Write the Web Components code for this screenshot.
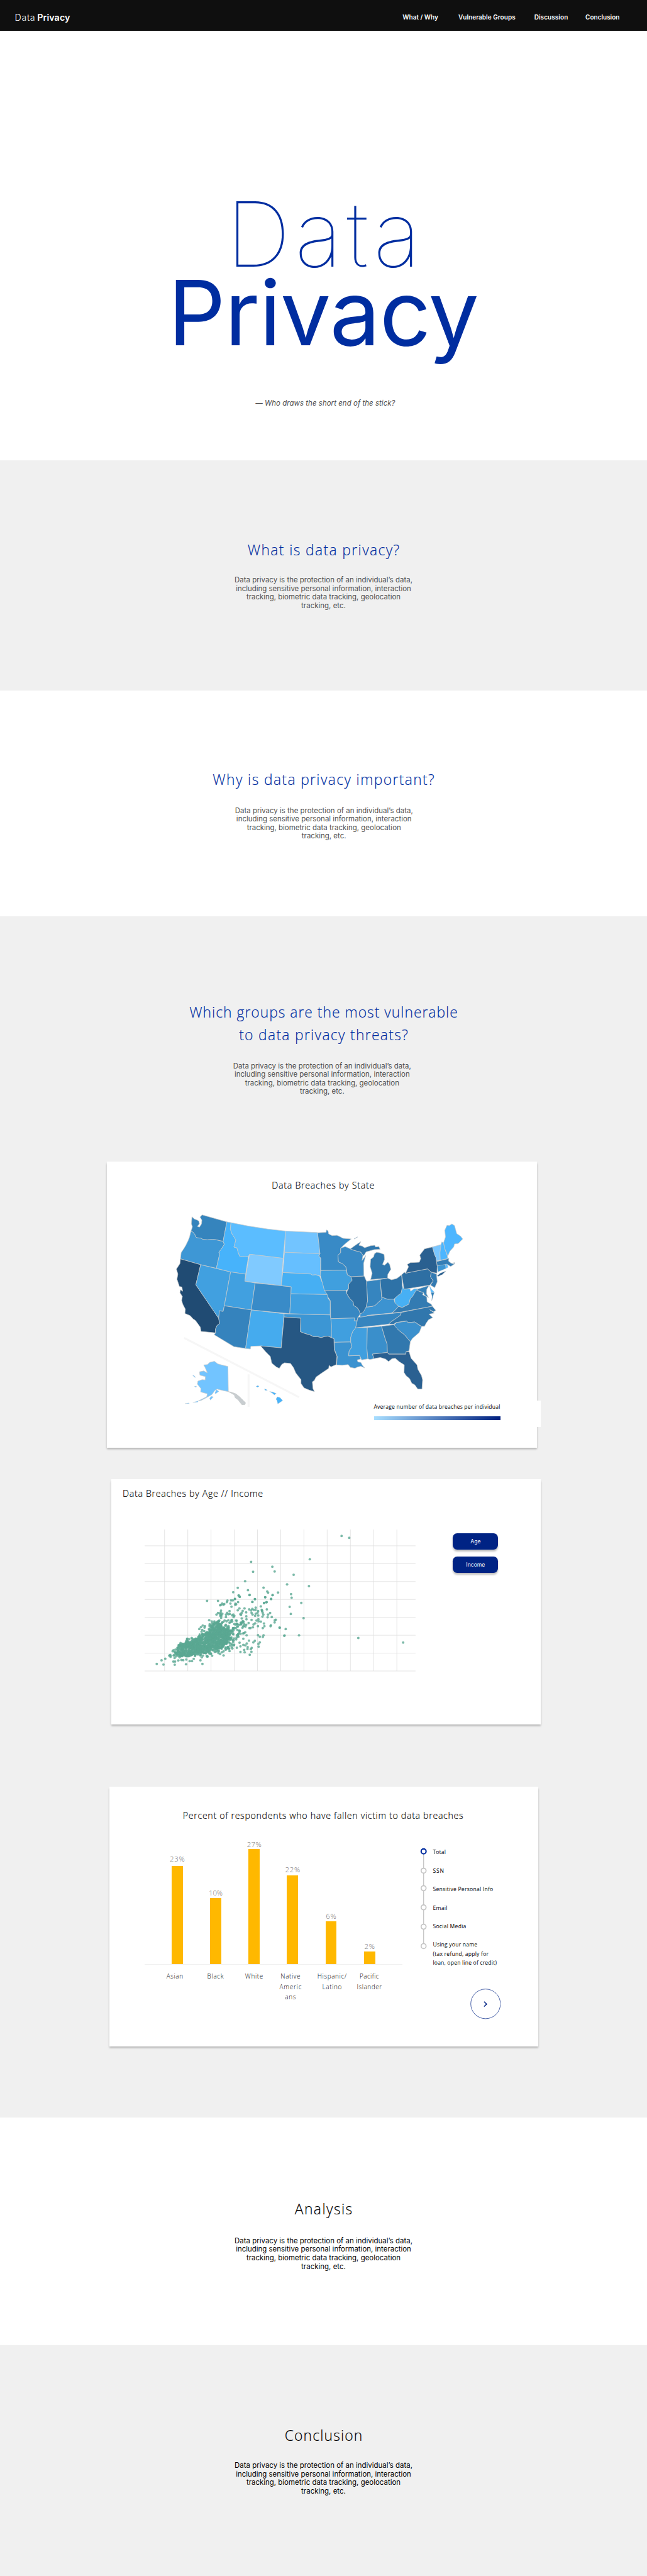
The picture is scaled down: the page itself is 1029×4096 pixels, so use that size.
<!DOCTYPE html>
<html lang="en">
<head>
<meta charset="utf-8">
<title>Data Privacy</title>
<style>
html,body{margin:0;padding:0;background:#fff}
body{width:1029px;height:4096px;overflow:hidden;background:#f0f0f0}
privacy-page{zoom:.714583}
</style>
</head>
<body>
<privacy-page></privacy-page>
<script>
const define=(name,html,after)=>customElements.define(name,class extends HTMLElement{
  connectedCallback(){
    if(this.shadowRoot)return;
    const t=document.createElement('template');
    t.innerHTML=typeof html==='function'?html(this):html;
    this.attachShadow({mode:'open'}).append(t.content.cloneNode(true));
    if(after)after(this);
  }
});

/* One line of text, tracked so that it spans exactly the width in "w". */
define('fit-line',el=>`<style>:host{display:block;width:${el.getAttribute('w')}px;white-space:nowrap;text-align:left}span{display:inline-block}</style><span><slot></slot></span>`,el=>{
  const s=el.shadowRoot.querySelector('span');
  s.style.letterSpacing='0px';
  const w=+el.getAttribute('w'),h=el.getBoundingClientRect().width;
  if(!h)return;
  const natural=s.getBoundingClientRect().width/h*w;
  s.style.letterSpacing=((w-natural)/(el.textContent.length-1)).toFixed(4)+'px';
});

define('site-header',`<style>
:host{display:flex;height:68px;background:#0f0f0f;color:#fff;font-family:Inter,sans-serif;box-sizing:border-box;padding-left:33px}
.logo{display:flex;gap:5px;font-size:20px;line-height:24px;margin-top:27px;font-weight:300}
b{font-weight:600}
nav{display:flex;font-size:14px;line-height:20px;font-weight:600;margin:28px 61px 0 auto}
</style>
<div class="logo"><fit-line w="45">Data</fit-line><fit-line w="73" style="font-weight:600">Privacy</fit-line></div>
<nav><fit-line w="79">What / Why</fit-line><fit-line w="127" style="margin-left:45px">Vulnerable Groups</fit-line><fit-line w="75" style="margin-left:42px">Discussion</fit-line><fit-line w="76" style="margin-left:39px">Conclusion</fit-line></nav>`);

define('hero-banner',`<style>
:host{display:flex;flex-direction:column;align-items:center;height:956px;box-sizing:border-box;padding-top:366px;background:#fff;font-family:Inter,sans-serif}
.t{font-size:200px;line-height:175px;color:#002da0}
.q{font-size:16px;line-height:20px;font-style:italic;color:#4f4f4f;margin-top:103px}
</style>
<fit-line class="t" w="433" style="font-weight:100">Data</fit-line>
<fit-line class="t" w="692">Privacy</fit-line>
<fit-line class="q" w="311" style="margin-left:8px">— Who draws the short end of the stick?</fit-line>`);

define('info-block',el=>`<style>
:host{display:flex;flex-direction:column;align-items:center;color:${el.hasAttribute('dark')?'#000':'#4f4f4f'}}
.h{display:flex;flex-direction:column;align-items:center;font:300 32px/50px "Open Sans",Lato,sans-serif;color:${el.hasAttribute('dark')?'#000':'#002da0'};-webkit-text-stroke:.25px}
.b{display:flex;flex-direction:column;align-items:center;font:400 16px/19px Inter,sans-serif;margin-top:${el.getAttribute('gap')}px;margin-left:${el.getAttribute('shift')||0}px}
</style>
<div class="h"><slot></slot></div>
<div class="b"><fit-line w="396">Data privacy is the protection of an individual’s data,</fit-line><fit-line w="390">including sensitive personal information, interaction</fit-line><fit-line w="343">tracking, biometric data tracking, geolocation</fit-line><fit-line w="99">tracking, etc.</fit-line></div>`);

define('page-band',el=>`<style>:host{display:block;box-sizing:border-box;height:${el.getAttribute('h')}px;padding-top:${el.getAttribute('top')}px;background:${el.hasAttribute('grey')?'#f0f0f0':'#fff'}}</style><slot></slot>`);

define('chart-card',el=>`<style>:host{display:block;box-sizing:border-box;background:#fff;box-shadow:0 4px 4px rgba(0,0,0,.25);font-family:"Open Sans",Lato,sans-serif;font-weight:300;color:#000}</style><slot></slot>`);

/* Outlines of the western and eastern states: colour, then points. */
const WEST=`3584bd 172,143 188,158 208,165 218,172 222,190 208,207 222,212 236,190 238,165 226,145 240,130 405,177 380,307 360,303 330,296 310,293 275,297 245,294 232,286 205,283 195,275 192,262 178,245 165,240 175,210 168,190
3e97d5 165,240 178,245 192,262 195,275 205,283 232,286 245,294 275,297 310,293 330,296 360,303 380,307 388,327 370,355 352,380 358,392 355,400 335,487 230,463 95,424 100,382 118,355 130,335 145,305 155,280
204b73 95,424 230,463 198,597 350,820 357,855 340,868 328,895 330,918 232,908 228,880 212,858 195,835 180,825 160,803 125,788 128,760 110,725 103,700 108,675 92,650 95,630 110,640 105,612 88,608 72,560 78,525 68,492 92,455
41a0e0 230,463 430,511 388,737 380,775 356,770 350,820 198,597
47b3fb 405,177 433,182 428,225 440,258 465,298 452,345 472,350 482,385 492,408 530,410 550,405 530,526 430,511 335,487 355,400 358,392 352,380 370,355 388,327 380,307
5bbdff 433,182 550,205 680,225 797,238 781,420 557,393 550,405 530,410 492,408 482,385 472,350 452,345 465,298 440,258 428,225
80caff 557,393 781,420 768,603 525,573
41a0e0 430,511 530,526 525,573 594,585 568,765 388,737
398bc8 594,585 835,610 825,790 568,765
3583bd 388,737 568,765 530,1022 452,1010 320,930 330,918 328,895 340,868 357,855 350,820 356,770 380,775
45abee 568,765 787,790 768,1018 630,1005 565,1008 562,1026 530,1022
72c4ff 797,238 1010,248 1020,330 1027,390 790,380
66bfff 790,380 1027,390 1018,402 1031,420 1030,538 1000,530 975,532 965,525 778,515
46aff3 778,515 965,525 975,532 1000,530 1025,540 1045,590 1055,632 1075,662 833,657 835,610 768,603
41a0e0 833,657 1075,662 1082,690 1095,705 1095,798 825,790
3c96d4 787,790 1095,798 1105,870 1102,948 1080,940 1055,943 1035,950 1010,943 985,944 960,932 925,922 895,910 898,820 787,812
265783 787,812 898,820 895,910 925,922 960,932 985,944 1010,943 1035,950 1055,943 1080,940 1120,957 1122,1030 1140,1075 1135,1130 1100,1145 1088,1135 1085,1155 1040,1185 1000,1213 990,1235 976,1245 980,1290 990,1310 955,1300 920,1285 900,1255 900,1230 865,1185 850,1150 830,1122 790,1118 772,1128 755,1155 735,1145 705,1120 695,1075 665,1045 630,1005 768,1018
72c4ff 322,1108 345,1125 370,1132 412,1142 415,1310 380,1303 340,1293 325,1302 305,1330 265,1352 235,1368 215,1372 270,1345 275,1325 230,1312 232,1290 208,1260 212,1240 240,1230 260,1232 262,1210 225,1200 222,1178 250,1172 275,1185 260,1150 250,1132 275,1130 290,1115
72c4ff 325,1320 335,1297 352,1308 330,1325
c8cdd0 415,1310 435,1314 465,1325 490,1345 530,1385 525,1397 505,1397 480,1365 460,1350 455,1332
72c4ff 290,1355 300,1342 315,1345 295,1367
72c4ff 178,1382 215,1372 210,1380
72c4ff 125,1390 150,1386 155,1390
72c4ff 176,1200 186,1203 197,1216 188,1213
72c4ff 188,1275 202,1273 200,1282
47b3fb 600,1275 612,1269 620,1275 610,1281
47b3fb 656,1292 668,1295 676,1302 660,1302
47b3fb 690,1309 712,1313 735,1323 722,1332 710,1322
47b3fb 742,1345 760,1350 778,1370 745,1392 740,1370 733,1360`;
const EAST=`388ac6 20,225 78,222 80,208 90,212 95,232 118,242 150,240 165,246 190,258 245,262 200,295 175,318 175,345 157,360 160,400 185,410 210,430 212,450 42,452 42,378 30,365 36,352
409fde 42,452 212,450 220,478 243,489 252,510 228,535 228,562 212,572 65,572 45,500 38,478
3788c3 65,572 212,572 215,590 235,620 258,640 262,662 285,675 297,690 308,710 290,735 285,755 265,755 268,738 108,742 105,632 90,612
409fdf 108,742 268,738 265,755 285,755 275,797 255,820 242,855 242,882 133,884 130,862 113,855
3b92d0 133,884 242,882 250,912 232,935 228,965 302,963 308,985 285,990 290,1002 310,1005 320,1022 335,1038 310,1028 290,1032 270,1040 240,1035 225,1018 185,1022 148,1020 152,970 133,925
409fdf 275,797 353,795 350,920 357,983 315,990 302,963 228,965 232,935 250,912 242,882 242,855 255,820
3a8fcb 353,795 448,787 470,855 485,895 487,945 387,955 398,982 370,988 357,983 350,920
3685bf 290,733 350,725 515,710 580,704 575,720 545,740 515,758 495,775 275,797
3c93d1 305,715 320,700 345,672 385,668 405,662 430,640 450,625 450,612 490,625 530,622 537,645 562,667 540,690 515,708 350,722 348,728 305,732
2d6ea2 243,489 332,485 348,517 355,635 345,672 325,705 305,712 297,690 285,675 262,662 258,640 235,620 215,590 218,575 228,562 228,535 252,510
3889c5 175,318 205,308 240,322 262,330 310,342 324,360 318,392 342,362 328,410 330,485 243,489 220,478 210,430 185,410 160,400 157,360 175,345
3178ae 240,322 270,302 290,290 310,278 296,300 318,305 335,315 375,303 402,300 408,310 430,308 438,325 400,326 365,335 345,340 330,362 324,360 310,342 262,330
3178ae 415,342 435,345 465,355 468,385 455,415 468,420 490,402 502,415 510,445 490,475 488,498 375,507 385,468 372,430 375,385 395,370 400,352
3685bf 348,517 438,506 450,625 430,640 405,662 385,668 345,672 355,635
2e72a7 438,506 488,498 515,508 550,500 582,478 588,560 578,590 548,610 530,625 490,625 450,612
2e6fa3 582,478 600,462 608,468 755,442 780,462 775,490 793,515 770,540 598,565
2a6090 608,468 628,430 620,415 640,405 700,402 710,380 703,360 735,322 788,310 802,355 812,375 820,425 818,468 780,462 755,442
2a6090 820,483 840,468 878,455 855,475 825,488
337bb3 780,462 815,474 820,520 803,555 775,540 793,515 775,490
79c6ff 788,310 845,296 847,315 838,345 840,390 815,395 812,375 802,355
4db6ff 845,296 850,280 862,285 870,320 888,365 890,380 840,390 838,345
4db6ff 862,285 875,250 870,210 885,180 900,182 918,172 935,182 950,230 975,245 990,262 960,290 935,292 930,310 905,335 890,365 870,320
347eb6 815,398 888,382 898,378 895,395 912,408 930,412 932,402 936,412 910,428 885,415 820,425
3c96d4 820,425 875,415 878,440 825,460
5bbdff 875,415 885,413 893,432 878,440
47b0f4 588,548 598,565 638,562 642,577 665,562 695,562 675,580 655,608 640,622 630,655 585,675 562,667 537,645 535,622 560,600 578,590
337bb2 515,708 540,690 562,667 585,675 630,655 640,622 655,608 680,570 705,578 728,585 722,598 750,610 752,640 780,655 787,667 580,702
3480b8 695,562 765,542 750,565 748,592 762,615 735,600 728,585 705,578 680,570
5bbdff 768,543 780,562 800,582 778,585
3480b8 778,585 800,585 792,605 783,635 785,605
3177ad 580,704 787,667 810,692 795,700 770,688 800,708 765,715 790,735 762,748 745,770 735,788 715,788 670,762 625,765 615,755 545,765 530,775 495,775 515,758 545,740 575,720
3b90cd 530,780 550,765 615,757 625,765 670,762 715,790 700,825 655,860 640,880 600,838 560,810
3178ae 448,787 530,778 560,810 600,838 640,880 632,935 612,940 610,955 495,955 487,945 485,895 470,855
2a6091 387,955 487,945 495,955 610,955 612,940 632,940 645,980 685,1020 690,1045 715,1085 722,1110 718,1165 690,1165 670,1140 650,1130 635,1102 612,1085 598,1065 600,1020 565,1000 540,980 518,982 495,1000 475,985 440,975 398,982`;
const polys=s=>s.split('\n').map(l=>{const i=l.indexOf(' ');return `<polygon fill="#${l.slice(0,i)}" points="${l.slice(i+1)}"/>`}).join('');

define('state-map',`<style>:host{display:block}svg{display:block;overflow:visible}polygon{stroke:#c6c9cb;stroke-width:1.1;vector-effect:non-scaling-stroke;stroke-linejoin:round}polygon.s{stroke-width:.5}</style>
<svg width="957" height="450" viewBox="238 2652 957 450">
<g transform="translate(370 2660) scale(.33333)"><path d="M120 952L887 1347M550 1195V1412" stroke="#f6f6f6" stroke-width="13"/></g>
<g transform="translate(700 2660) scale(.33333 .3699)">${polys(EAST)}<path d="M265 262L288 250" stroke="#a9bccb" stroke-width="4"/></g>
<g transform="translate(370 2660) scale(.33333)">${polys(WEST)}</g>
</svg>`,el=>{
  /* Islands are too small for the full border width. */
  for(const p of el.shadowRoot.querySelectorAll('polygon')){const b=p.getBBox();if(b.width<60&&b.height<60)p.classList.add('s')}
});

/* Isolated points are listed; the cluster is spread inside nested outlines. */
const FAR='840,388 867,399 728,523 521,538 596,567 604,594 528,596 671,613 500,651 648,669 725,679 474,689 565,688 510,703 458,715 578,710 581,718 616,717 597,731 516,730 662,726 664,747 477,734 481,741 571,744 592,754 535,755 464,754 526,771 567,777 576,773 698,777 657,800 661,841 706,866 690,965 639,966 638,968 899,981 1057,1007 622,921 643,929';
const NEAR='57,460 102,464 177,465 253,461 362,459 89,435 114,425 168,444 179,444 201,436 222,433 234,434 254,430 277,440 292,440 304,426 349,435 358,415 393,38 466,38 393,410 427,405 503,403 616,380 644,382 689,379 678,399 685,361 691,352 664,347 663,360 641,366 592,351 616,342 635,332 648,336 658,323 610,318 673,304 702,316 712,305 736,326 745,316 737,344 733,267 745,278 765,280 770,268 657,268 635,292 877,217 817,207 819,201 844,182 845,167 852,164 825,146 814,119 800,130 797,148 792,95 752,75 773,53 789,48 820,26 781,14 712,27 695,46 733,208 776,208 765,220 773,190 752,177 736,161 723,170 737,175 714,188 703,196 699,215 683,220 690,166 656,161 655,142 654,115 631,106 609,89 598,101 643,89 674,95 695,92 687,103 690,118 697,130 704,98 718,84 717,100 734,107 730,118 718,125 735,136 714,138 758,98 761,107 764,117 769,130 763,144 760,104 620,132 615,128 624,118 543,107 527,118 520,130 535,128 545,126 519,146 556,77 549,56 553,35 565,35 579,26 600,47 583,57 587,62 581,65 525,47 529,36 480,68 494,56 502,65 508,60 486,65 676,0 604,2 611,11 830,0 560,135 568,130 575,138 570,147 486,104 484,116 478,124 485,131 495,125 481,138 489,138 466,119 456,130 487,152 625,156 407,168 341,226 352,214 364,203 379,208 376,217 361,233 356,244 374,240 261,292 260,292 252,312 216,320 140,404 147,400 149,412 150,405 163,374 169,368 177,380 170,403 176,420 451,378 469,387 480,393 491,382 503,376 543,373 536,358 562,356 460,368 397,410 391,406';
const OUTER=[[150,398],[190,345],[260,300],[335,258],[400,230],[410,180],[460,150],[500,175],[520,160],[600,165],[680,185],[680,225],[610,280],[580,325],[560,352],[500,372],[420,395],[320,412],[190,420]];
const CORE=[[180,395],[200,335],[300,300],[355,262],[400,250],[430,190],[475,170],[500,215],[560,240],[520,330],[480,355],[380,388],[260,410]];
const inside=(p,x,y)=>{let c=false;for(let i=0,j=p.length-1;i<p.length;j=i++){const[a,b]=p[i],[d,e]=p[j];if((b>y)!==(e>y)&&x<(d-a)*(y-b)/(e-b)+a)c=!c}return c};
let seed=7;const rnd=()=>(seed=(seed*16807)%2147483647)/2147483647;
const spread=(p,n)=>{const o=[];while(o.length<n){const x=140+rnd()*560,y=140+rnd()*290;if(inside(p,x,y))o.push([x,y])}return o};
const dot=(x,y)=>`<circle cx="${x.toFixed(1)}" cy="${y.toFixed(1)}" r="2.8"/>`;
const pts=s=>s.split(' ').map(p=>p.split(',').map(Number));
const dots=pts(FAR).map(([x,y])=>dot(230+x*.6314,3270+y*.3827)).join('')
 +[...pts(NEAR),...spread(OUTER,330),...spread(CORE,900)].map(([x,y])=>dot(330+x/3,3550+y/3)).join('');
let grid='';
for(let i=0;i<11;i++)grid+=`<path d="M${(366.4+i*51.7).toFixed(1)} 3404V3719"/>`;
for(let i=0;i<8;i++)grid+=`<path d="M322 ${(3440.3+i*39.8).toFixed(1)}H925"/>`;
define('scatter-plot',`<style>:host,svg{display:block}path{stroke:#dedede;stroke-width:1.1}circle{fill:#5aa792;fill-opacity:.8}</style>
<svg width="604" height="317" viewBox="322 3404 604 317">${grid}${dots}</svg>`);

define('pill-button',`<style>:host{display:flex;align-items:center;justify-content:center;width:101px;height:36px;border-radius:10px;background:#002384;color:#fff;box-shadow:0 4px 4px rgba(0,0,0,.25);font:400 12px/20px Inter,sans-serif}</style><slot></slot>`);

define('bar-chart',()=>{
const bars=[['23%',33,218,5],['10%',31,146,2],['27%',32,255,0],['22%',33,197,2],['6%',23,95,0],['2%',23,27,2]];
const labels=[[42,['Asian',37]],[40.5,['Black',36.5]],[36.1,['White',40]],[30.9,['Native',43.5],['Americ',49],['ans',24]],[42.5,['Hispanic/',65],['Latino',43.5]],[33,['Pacific',43],['Islander',55.5]]];
return `<style>:host{display:block;width:573px}
.p{display:flex;align-items:flex-end;gap:60.6px;height:316px;padding-left:60px;border-bottom:2.5px solid #f0f0f0}
.c{display:flex;flex-direction:column;align-items:center;width:25px;font-size:16px;line-height:20px;color:#777}
.c i{display:block;width:25px;background:#ffb800}
.l{display:flex;margin-top:15px;font-size:14px;line-height:23px}
.l div{display:flex;flex-direction:column;align-items:center;width:50px}</style>
<div class="p">${bars.map(b=>`<div class="c"><fit-line w="${b[1]}" style="margin-bottom:${b[3]}px">${b[0]}</fit-line><i style="height:${b[2]}px"></i></div>`).join('')}</div>
<div class="l">${labels.map(([m,...t])=>`<div style="margin-left:${m}px">${t.map(a=>`<fit-line w="${a[1]}">${a[0]}</fit-line>`).join('')}</div>`).join('')}</div>`});

define('step-filter',()=>{
const ys=[4120,4163,4202,4244.7,4287.8,4331];
const t=[['Total',28.5],['SSN',24.5],['Sensitive Personal Info',134],['Email',32],['Social Media',74],['Using your name',99],['(tax refund, apply for',124],['loan, open line of credit)',142]];
return `<style>:host{display:flex;align-items:flex-start}svg{display:block;flex:none}
.r{margin-top:58px}
.t{margin:58px 0 0 12.5px;font-size:12px;line-height:20px;font-weight:400}
.n{margin:47px 0 0 83px}</style>
<svg class="r" width="16" height="228" viewBox="935 4112 16 228"><path d="M943 4120V4331" stroke="#c4c4c4" stroke-width="1.8"/>${ys.map((y,i)=>`<circle cx="943" cy="${y}" r="5.5" fill="#fff" stroke="${i?'#c4c4c4':'#002da0'}" stroke-width="${i?2.4:3}"/>`).join('')}</svg>
<div class="t">${t.map((a,i)=>`<fit-line w="${a[1]}" style="margin-bottom:${i<5?21.2:0}px">${a[0]}</fit-line>`).join('')}
<svg class="n" width="68" height="68" viewBox="0 0 68 68" fill="none" stroke="#002384"><circle cx="34" cy="34" r="33"/><path d="M30.5 29L36.5 34.5L30.5 40" stroke-width="2"/></svg></div>`});

define('privacy-page',`<style>
:host{display:block;width:1440px;background:#f0f0f0}
.t{font-size:20px;line-height:30px;-webkit-text-stroke:.2px}
.legend{width:404px;height:60px;box-sizing:border-box;margin:14px 0 0 562px;padding:6px 0 0 32px;background:#fff;font-size:12px;line-height:18px;font-weight:400}
.ramp{width:282px;height:9px;margin-top:11px;background:linear-gradient(90deg,#a8deff,#00207f)}
.row{display:flex;align-items:flex-start}
.btns{display:flex;flex-direction:column;gap:16px;margin:8px 0 0 82px}
</style>
<site-header></site-header>
<hero-banner></hero-banner>
<page-band grey h="512" top="175.5"><info-block gap="32.5"><fit-line w="338">What is data privacy?</fit-line></info-block></page-band>
<page-band h="503" top="173.5"><info-block gap="35.5" shift="2"><fit-line w="493">Why is data privacy important?</fit-line></info-block></page-band>
<page-band grey h="2673" top="189">
 <info-block gap="35" shift="-6"><fit-line w="597">Which groups are the most vulnerable</fit-line><fit-line w="376">to data privacy threats?</fit-line></info-block>
 <chart-card style="width:957px;height:637px;margin:146px 0 0 238px;padding-top:38px"><fit-line class="t" w="228" style="margin-left:367px">Data Breaches by State</fit-line><state-map style="margin-top:-1px"></state-map>
  <div class="legend"><fit-line w="281">Average number of data breaches per individual</fit-line><div class="ramp"></div></div></chart-card>
 <chart-card style="width:957px;height:545px;margin:70px 0 0 247px;padding-top:16px"><fit-line class="t" w="312" style="margin-left:26px">Data Breaches by Age // Income</fit-line>
  <div class="row" style="margin-top:66px"><scatter-plot style="margin-left:75px"></scatter-plot><div class="btns"><pill-button><fit-line w="23">Age</fit-line></pill-button><pill-button><fit-line w="42">Income</fit-line></pill-button></div></div></chart-card>
 <chart-card style="width:954px;height:578px;margin:139px 0 0 244px;padding-top:49px"><fit-line class="t" w="624" style="margin-left:163px">Percent of respondents who have fallen victim to data breaches</fit-line>
  <div class="row" style="margin-top:-1px"><bar-chart style="margin-left:78px"></bar-chart><step-filter style="margin-left:40px"></step-filter></div></chart-card>
</page-band>
<page-band h="507" top="179.5"><info-block dark gap="36"><fit-line w="128">Analysis</fit-line></info-block></page-band>
<page-band grey h="512" top="175.5"><info-block dark gap="33"><fit-line w="173">Conclusion</fit-line></info-block></page-band>`);
</script>
</body>
</html>
